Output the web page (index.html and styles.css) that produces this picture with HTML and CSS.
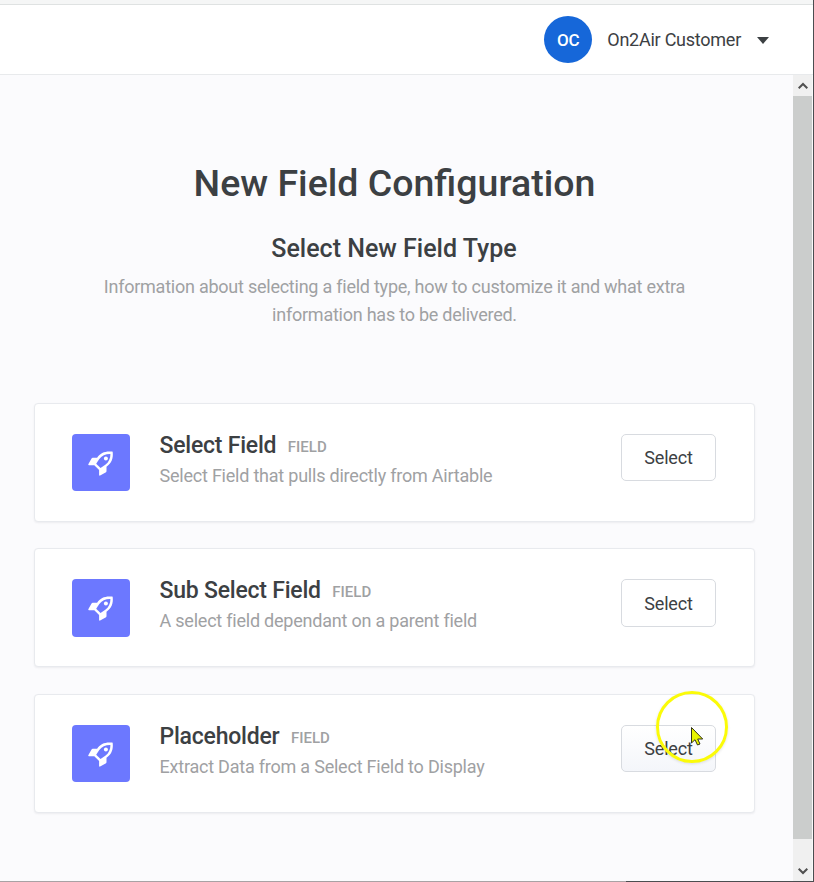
FILE: index.html
```html
<!DOCTYPE html>
<html lang="en">
<head>
  <meta charset="UTF-8">
  <meta name="viewport" content="width=device-width, initial-scale=1.0">
  <title>New Field Configuration</title>
  <link rel="stylesheet" href="styles.css">
</head>
<body>
  <svg class="sprite" width="0" height="0">
    <symbol id="rocket" viewBox="0 0 26 26">
      <path d="M24.2 1.6C17.5.8 12.4 2.6 9.1 7.8H4.9c-.7 0-1.2.3-1.5.9L.3 14.3c-.2.5.1.9.6.9h5.4l4.8 4.8v5c0 .6.5.8 1 .6l5.5-3c.6-.3.9-.8.9-1.5v-4.3C23.6 13.4 25.4 8.3 24.7 2.1c0-.3-.2-.5-.5-.5z" fill="#fff"/>
      <path d="M22.400 4c.1 4.4-1.7 8.3-5.1 10.8l-4.8 3.2-4.3-4.3 2.9-4.5C13.7 5.500 17.700 3.900 22.400 4z" fill="#6c78ff"/>
      <circle cx="17.900" cy="8.400" r="2" fill="#fff"/>
    </symbol>
  </svg>

  <div class="top-strip"></div>

  <header class="header-container">
    <div class="avatar">OC</div>
    <span class="user-name">On2Air Customer</span>
    <span class="caret"></span>
  </header>

  <div class="page">
    <main class="content">
      <h1>New Field Configuration</h1>
      <h2>Select New Field Type</h2>
      <p class="intro">Information about selecting a field type, how to customize it and what extra information has to be delivered.</p>

      <div class="field-list">
        <div class="field-card">
          <div class="field-icon"><svg width="26" height="26"><use href="#rocket"/></svg></div>
          <div class="field-info">
            <h3><span class="field-name">Select Field</span> <span class="tag">FIELD</span></h3>
            <p>Select Field that pulls directly from Airtable</p>
          </div>
          <button>Select</button>
        </div>

        <div class="field-card">
          <div class="field-icon"><svg width="26" height="26"><use href="#rocket"/></svg></div>
          <div class="field-info">
            <h3><span class="field-name">Sub Select Field</span> <span class="tag">FIELD</span></h3>
            <p>A select field dependant on a parent field</p>
          </div>
          <button>Select</button>
        </div>

        <div class="field-card">
          <div class="field-icon"><svg width="26" height="26"><use href="#rocket"/></svg></div>
          <div class="field-info">
            <h3><span class="field-name">Placeholder</span> <span class="tag">FIELD</span></h3>
            <p>Extract Data from a Select Field to Display</p>
          </div>
          <button class="hovered">Select</button>
        </div>
      </div>
    </main>

    <!-- Scrollbar -->
    <div class="scrollbar">
      <div class="scroll-arrow"><svg width="10" height="8" viewBox="0 0 10 8"><path d="M.7 6.300L5 2l4.300 4.300"/></svg></div>
      <div class="scroll-thumb"></div>
      <div class="scroll-arrow scroll-down"><svg width="10" height="8" viewBox="0 0 10 8"><path d="M.7 1.700L5 6l4.300-4.300"/></svg></div>
    </div>
  </div>

  <div class="bottom-edge"></div>

  <!-- Mouse pointer with highlight ring -->
  <div class="pointer-ring"></div>
  <svg class="pointer" width="14" height="20" viewBox="0 0 14 20">
    <path d="M.5.500v15.500l3.500-3.300 2.500 5.300 2.500-1-2.300-5h5z" fill="#e8f500" stroke="#33331c" stroke-width="1"/>
  </svg>
</body>
</html>
```

FILE: styles.css
```css
* {
  box-sizing: border-box;
}

body {
  font-family: Roboto, "Liberation Sans", sans-serif;
  background-color: #fbfbfd;
  color: #3c4043;
  margin: 0;
  height: 882px;
  display: flex;
  flex-direction: column;
  overflow: hidden;
  border-right: 1px solid #4b4d50;
}

h1, h2, h3, p {
  margin: 0;
  font-weight: 500;
}

.sprite {
  position: absolute;
}

.top-strip {
  height: 5px;
  flex-shrink: 0;
  background-color: #f5f6f6;
  border-bottom: 1px solid #dfe2e2;
}

.header-container {
  height: 70px;
  flex-shrink: 0;
  display: flex;
  align-items: center;
  justify-content: flex-end;
  padding-right: 44px;
  background-color: #fff;
  border-bottom: 1px solid #e8eaec;
}

.avatar {
  width: 48px;
  height: 47px;
  border-radius: 50%;
  background-color: #1667d9;
  color: #fff;
  font-size: 17px;
  font-weight: 500;
  line-height: 48px;
  text-align: center;
}

.user-name {
  margin-left: 15px;
  font-size: 18px;
  letter-spacing: -0.25px;
}

.caret {
  margin: 2px 0 0 16px;
  border: 6.500px solid transparent;
  border-top: 7px solid #3c4043;
  border-bottom: 0;
}

.page {
  flex: 1;
  display: flex;
}

.content {
  flex: 1;
  padding: 84px 38px 0 34px;
  text-align: center;
}

h1 {
  font-size: 37.500px;
  line-height: 48px;
}

h2 {
  margin-top: 27px;
  padding-right: 1px;
  font-size: 25px;
  line-height: 30px;
}

.intro {
  width: 610px;
  margin: 9px auto 0;
  font-size: 18px;
  font-weight: 400;
  line-height: 28px;
  letter-spacing: -0.24px;
  color: #9fa1a3;
}

.field-list {
  margin-top: 74px;
  display: flex;
  flex-direction: column;
  gap: 26.600px;
  text-align: left;
}

.field-card {
  height: 118.900px;
  display: flex;
  align-items: flex-start;
  padding: 30px 38px 0 37px;
  background-color: #fff;
  border: 1px solid #e8eaee;
  border-radius: 4px;
  box-shadow: 0 1px 2px rgba(60, 64, 80, 0.08);
}

.field-icon {
  width: 58px;
  height: 57.400px;
  display: flex;
  align-items: center;
  justify-content: center;
  border-radius: 4px;
  background-color: #6c78ff;
}

.field-info {
  flex: 1;
  margin-left: 29.500px;
}

.field-info h3 {
  font-size: 23px;
  line-height: 24px;
  letter-spacing: -0.22px;
}

.tag {
  position: relative;
  top: -1px;
  margin-left: 6px;
  font-size: 15px;
  letter-spacing: 0;
  color: #9fa1a3;
}

.field-info p {
  margin-top: 2px;
  font-size: 18px;
  font-weight: 400;
  line-height: 28px;
  letter-spacing: -0.22px;
  color: #9fa1a3;
}

button {
  width: 95px;
  height: 47.400px;
  padding: 0;
  background-color: #fff;
  color: #3c4043;
  border: 1px solid #d8dbe0;
  border-radius: 5px;
  font-family: inherit;
  font-size: 18px;
  letter-spacing: -0.2px;
  cursor: pointer;
}

button.hovered {
  background: linear-gradient(#fff, #f4f6fa);
}

.scrollbar {
  width: 20px;
  display: flex;
  flex-direction: column;
  background-color: #f0f0f0;
  border-right: 1px solid #fafafa;
}

.scroll-arrow {
  height: 21px;
  display: flex;
  align-items: center;
  justify-content: center;
}

.scroll-arrow path {
  fill: none;
  stroke: #505050;
  stroke-width: 2;
}

.scroll-thumb {
  height: 743px;
  background-color: #cbcdcc;
}

.scroll-down {
  margin-top: auto;
}

.bottom-edge {
  height: 1px;
  flex-shrink: 0;
  background: linear-gradient(to right, #a8a2a4 626px, #4b4d50 626px);
}

.pointer-ring {
  position: absolute;
  left: 656px;
  top: 691px;
  width: 72px;
  height: 72px;
  border: 3px solid #fbfb08;
  border-radius: 50%;
  box-shadow: 0 1px 3px rgba(0, 0, 0, 0.12);
}

.pointer {
  position: absolute;
  left: 691px;
  top: 727px;
}
```
